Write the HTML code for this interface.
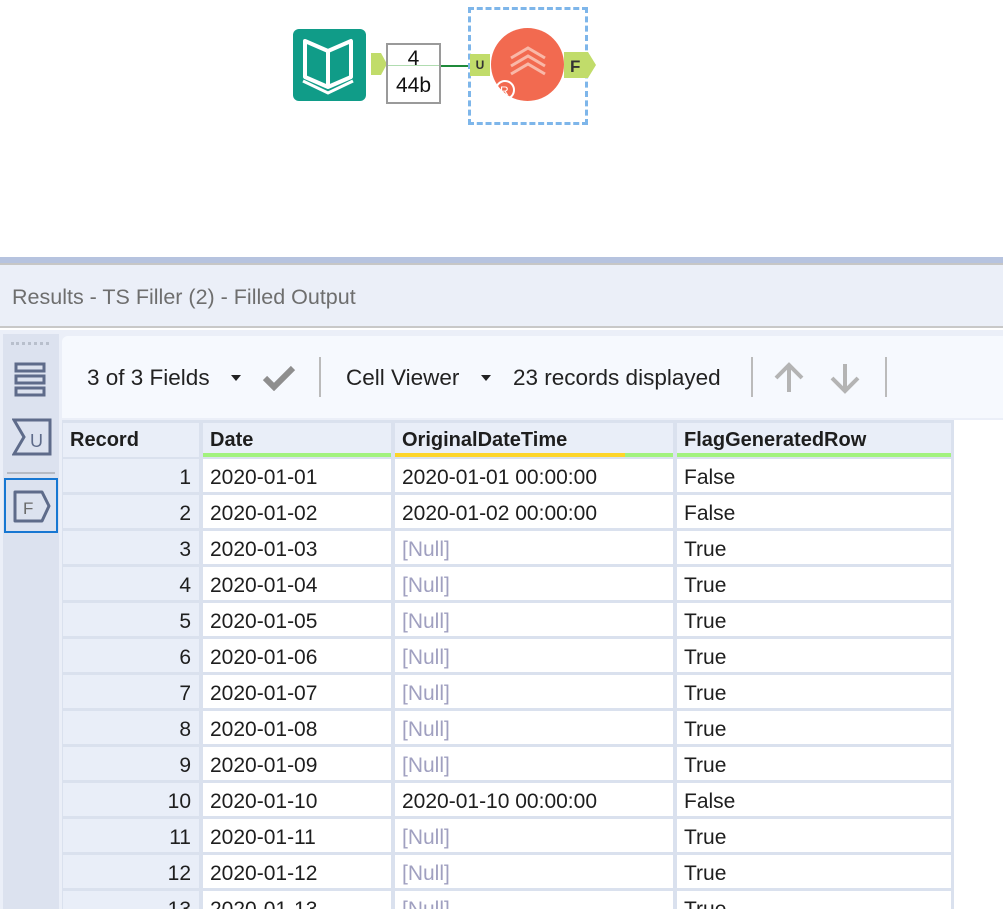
<!DOCTYPE html>
<html><head><meta charset="utf-8"><style>
*{margin:0;padding:0;box-sizing:border-box}
html{width:1003px;height:909px;overflow:hidden}
body{width:1003px;height:909px;overflow:hidden;background:#fff;font-family:"Liberation Sans",sans-serif;position:relative;color:#1e1e1e}
.a{position:absolute}
.cell{position:absolute;height:33px;font-size:21px;line-height:37px;padding-left:7px;white-space:nowrap;overflow:hidden}
.rec{background:#e9eef8;text-align:right;padding-right:8px;padding-left:0}
.w{background:#fff}
.null{color:#a0a0c0}
.hd{position:absolute;top:423px;height:34px;background:#e9eef8;font-weight:bold;font-size:20px;line-height:34px;padding-left:7px;white-space:nowrap;overflow:hidden}
</style></head><body>
<div class="a" style="left:293px;top:29px;width:73px;height:72px;background:#109c88;border-radius:6px"></div>
<svg class="a" style="left:293px;top:29px" width="73" height="72" viewBox="0 0 73 72">
<path d="M12 12 L35 22 L35 58 L12 48 Z M35 22 L58 12 L58 48 L35 58" fill="none" stroke="#fff" stroke-width="4" stroke-linejoin="round"/>
<path d="M10 52 L35 64 L60 52" fill="none" stroke="#fff" stroke-width="3"/>
<circle cx="49" cy="25" r="3" fill="#109c88"/><circle cx="49" cy="34" r="3" fill="#109c88"/><circle cx="49" cy="43" r="3" fill="#109c88"/>
</svg>
<svg class="a" style="left:370px;top:52px" width="18" height="24"><path d="M1 1 H11 L17 12 L11 23 H1 Z" fill="#c1dc6a"/></svg>
<div class="a" style="left:386px;top:43px;width:55px;height:61px;border:2px solid #9a9a9a;background:#fff;text-align:center;font-size:21px;line-height:27px;color:#111">4<br>44b</div>
<div class="a" style="left:388px;top:65px;width:51px;height:1px;background:#b0dcb0"></div>
<div class="a" style="left:441px;top:65px;width:30px;height:2px;background:#1f8a3a"></div>
<div class="a" style="left:468px;top:7px;width:120px;height:118px;border:3px dashed #7eb6ea"></div>
<div class="a" style="left:491px;top:28px;width:73px;height:73px;border-radius:50%;background:#f26a50"></div>
<svg class="a" style="left:491px;top:28px" width="73" height="73"><path d="M20 30 L37 20 L54 30 M20 38 L37 28 L54 38 M20 46 L37 36 L54 46" fill="none" stroke="#f9b8a8" stroke-width="3"/><circle cx="14" cy="62" r="9" fill="none" stroke="#fff" stroke-width="2"/><text x="9" y="67" font-size="12" fill="#fff" font-family="Liberation Sans">R</text></svg>
<div class="a" style="left:470px;top:54px;width:20px;height:22px;background:#c1dc6a;font-size:12px;font-weight:bold;text-align:center;line-height:22px;color:#333">U</div>
<svg class="a" style="left:563px;top:51px" width="35" height="28"><path d="M1 1 H25 L33 14 L25 27 H1 Z" fill="#c1dc6a"/><text x="7" y="21" font-size="17" font-weight="bold" fill="#333" font-family="Liberation Sans">F</text></svg>
<div class="a" style="left:0;top:257px;width:1003px;height:6px;background:#b6c3df"></div>
<div class="a" style="left:0;top:263px;width:1003px;height:65px;background:#ebeff8;border-top:2px solid #c6c6c6;border-bottom:2px solid #c8c8c8"></div>
<div class="a" style="left:12px;top:285px;font-size:21.5px;color:#6e6e6e">Results - TS Filler (2) - Filled Output</div>
<div class="a" style="left:0;top:330px;width:1003px;height:579px;background:#ebeff8"></div>
<div class="a" style="left:3px;top:334px;width:56px;height:575px;background:#dce2ef"></div>
<div class="a" style="left:11px;top:342px;width:38px;height:3px;border-top:3px dotted #b8bfcc"></div>
<svg class="a" style="left:14px;top:362px" width="34" height="36"><g fill="none" stroke="#5e6b8a" stroke-width="3"><rect x="2" y="2" width="28" height="7"/><rect x="2" y="14" width="28" height="7"/><rect x="2" y="26" width="28" height="7"/></g></svg>
<svg class="a" style="left:12px;top:418px" width="40" height="40"><path d="M2 2 H38 V36 H2 L12 19 Z" fill="none" stroke="#5e6b8a" stroke-width="3"/><text x="18" y="29" font-size="18" fill="#5e6b8a" font-family="Liberation Sans">U</text></svg>
<div class="a" style="left:7px;top:472px;width:48px;height:2px;background:#b5bac4"></div>
<div class="a" style="left:4px;top:478px;width:54px;height:55px;border:2px solid #1777d2"></div>
<svg class="a" style="left:12px;top:489px" width="40" height="36"><path d="M3 3 H30 L37 17 L30 32 H3 Z" fill="none" stroke="#5e6b8a" stroke-width="3" stroke-linejoin="round"/><text x="11" y="25" font-size="17" fill="#6a6a6a" font-family="Liberation Sans">F</text></svg>
<div class="a" style="left:62px;top:336px;width:941px;height:82px;background:#f6f9fe;border-radius:6px 0 0 0"></div>
<div class="a" style="left:87px;top:365px;font-size:22.5px;color:#222">3 of 3 Fields</div>
<div class="a" style="left:231px;top:375px;border:5px solid transparent;border-top:6px solid #222"></div>
<svg class="a" style="left:262px;top:365px" width="34" height="26"><path d="M3 13 L12 22 L31 3" fill="none" stroke="#8e8e8e" stroke-width="6"/></svg>
<div class="a" style="left:319px;top:357px;width:2px;height:40px;background:#bbb"></div>
<div class="a" style="left:346px;top:365px;font-size:22.5px;color:#222">Cell Viewer</div>
<div class="a" style="left:481px;top:375px;border:5px solid transparent;border-top:6px solid #222"></div>
<div class="a" style="left:513px;top:365px;font-size:22.5px;color:#222">23 records displayed</div>
<div class="a" style="left:751px;top:357px;width:2px;height:40px;background:#bbb"></div>
<svg class="a" style="left:772px;top:362px" width="34" height="32"><path d="M17 30 V4 M4 16 L17 3 L30 16" fill="none" stroke="#b4b4b4" stroke-width="4"/></svg>
<svg class="a" style="left:828px;top:362px" width="34" height="32"><path d="M17 2 V28 M4 16 L17 29 L30 16" fill="none" stroke="#b4b4b4" stroke-width="4"/></svg>
<div class="a" style="left:885px;top:357px;width:2px;height:40px;background:#bbb"></div>
<div class="a" style="left:62px;top:420px;width:892px;height:489px;background:#dae1ee"></div>
<div class="a" style="left:954px;top:420px;width:49px;height:489px;background:#fff"></div>
<div class="hd" style="left:63px;width:136px">Record</div>
<div class="hd" style="left:203px;width:188px;border-bottom:4px solid #a2f27e">Date</div>
<div class="hd" style="left:395px;width:278px;border-bottom:4px solid #a2f27e">OriginalDateTime</div>
<div class="a" style="left:395px;top:453px;width:230px;height:4px;background:#fdd52a"></div>
<div class="hd" style="left:677px;width:274px;border-bottom:4px solid #a2f27e">FlagGeneratedRow</div>
<div id="rows"></div>
<script>
var orig={1:"2020-01-01 00:00:00",2:"2020-01-02 00:00:00",10:"2020-01-10 00:00:00"};
var h="";
for(var i=1;i<=13;i++){var t=459+36*(i-1);var d="2020-01-"+(i<10?"0"+i:i);var ht=Math.min(33,909-t);
h+='<div class="cell rec" style="left:63px;top:'+t+'px;width:136px;height:'+ht+'px">'+i+'</div>';
h+='<div class="cell w" style="left:203px;top:'+t+'px;width:188px;height:'+ht+'px">'+d+'</div>';
h+=orig[i]?'<div class="cell w" style="left:395px;top:'+t+'px;width:278px;height:'+ht+'px">'+orig[i]+'</div>':'<div class="cell w null" style="left:395px;top:'+t+'px;width:278px;height:'+ht+'px">[Null]</div>';
h+='<div class="cell w" style="left:677px;top:'+t+'px;width:274px;height:'+ht+'px">'+(orig[i]?"False":"True")+'</div>';}
document.getElementById("rows").innerHTML=h;
</script>
</body></html>
